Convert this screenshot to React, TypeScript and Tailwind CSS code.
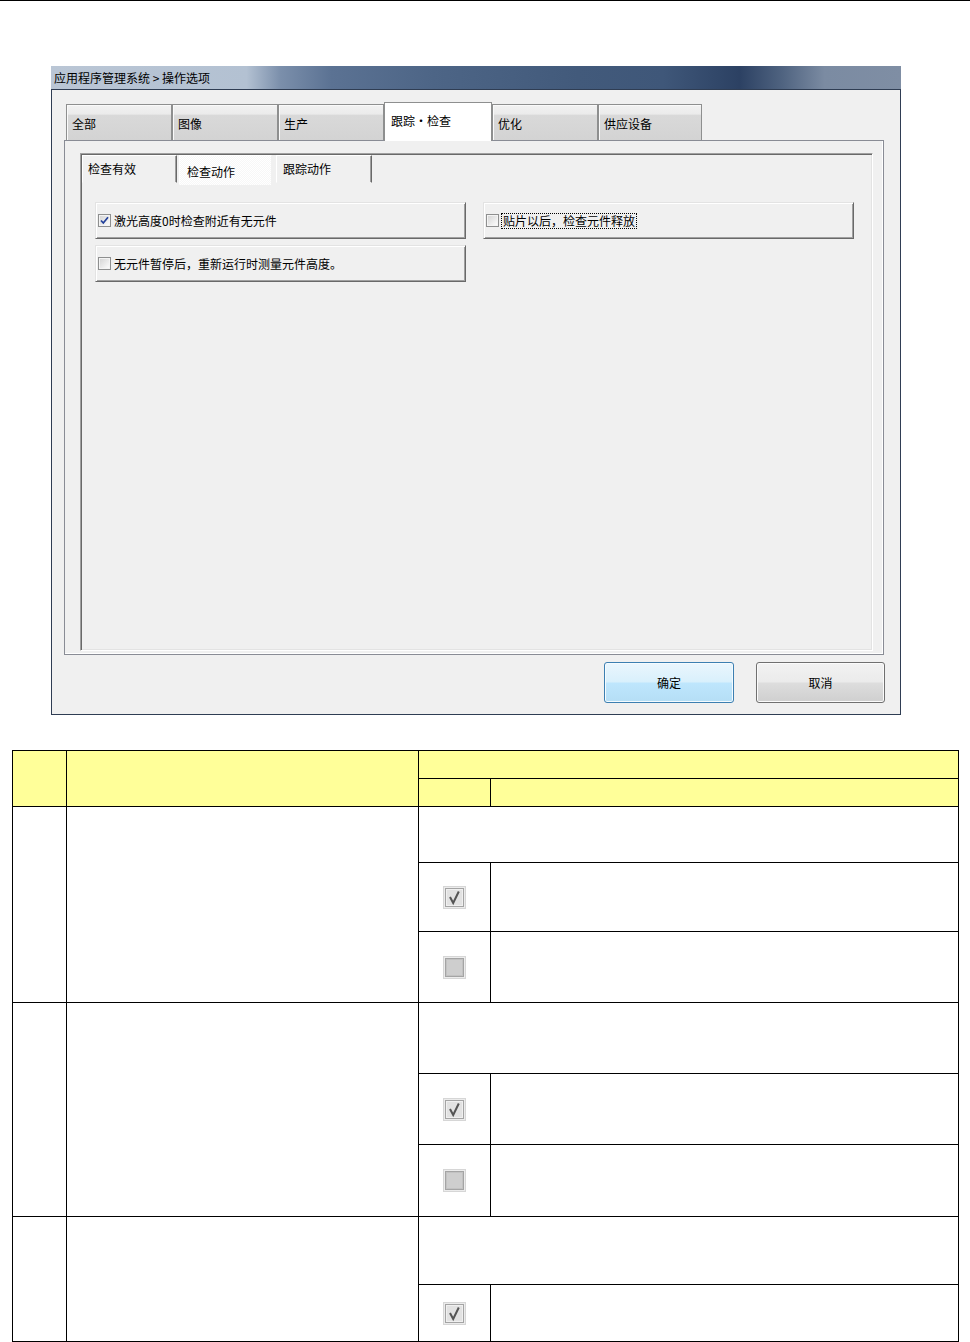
import React from "react";

const tabs = [
  { label: "全部", w: "w-[106px]" },
  { label: "图像", w: "w-[106px]" },
  { label: "生产", w: "w-[106px]" },
  { label: "跟踪・检查", w: "w-[108px]" },
  { label: "优化", w: "w-[106px]" },
  { label: "供应设备", w: "w-[104px]" },
];
const activeTab = 3;

function SmallCheck({ checked }: { checked: boolean }) {
  return (
    <svg width="13" height="13" viewBox="0 0 13 13" className="shrink-0">
      <defs>
        <linearGradient id={checked ? "cbOn" : "cbOff"} x1="0" y1="0" x2="1" y2="1">
          <stop offset="0" stopColor="#d6d6d6" />
          <stop offset="1" stopColor="#fbfbfb" />
        </linearGradient>
      </defs>
      <rect x="0.5" y="0.5" width="12" height="12" fill="#f4f4f4" stroke="#8e8f8f" />
      <rect x="2" y="2" width="9" height="9" fill={`url(#${checked ? "cbOn" : "cbOff"})`} />
      {checked && (
        <path d="M3 6.5 L5.3 9 L10 3.2" fill="none" stroke="#22409a" strokeWidth="1.7" />
      )}
    </svg>
  );
}

function TableCheck({ checked }: { checked: boolean }) {
  return (
    <svg width="23" height="23" viewBox="0 0 23 23" className="mx-auto block">
      <rect x="0.5" y="0.5" width="22" height="22" fill="#ececec" stroke="#d6d6d6" />
      <rect x="2.5" y="2.5" width="18" height="18" fill={checked ? "#e2e2e2" : "#cecece"} stroke="#a4a4a4" />
      <rect x="3.5" y="3.5" width="16" height="16" fill="none" stroke={checked ? "#f0f0f0" : "#c2c2c2"} />
      {checked && (
        <path d="M7 11 L10.2 17 L15.8 5.5" fill="none" stroke="#555555" strokeWidth="2" />
      )}
    </svg>
  );
}

function OptionButton({ label, checked, focused }: { label: string; checked: boolean; focused?: boolean }) {
  return (
    <div className="flex h-[37px] items-center border border-t-[#e3e3e3] border-l-[#e3e3e3] border-r-[#696969] border-b-[#696969] bg-[#f0f0f0] pl-[2px] shadow-[inset_1px_1px_0_#ffffff,inset_-1px_-1px_0_#a0a0a0]">
      <SmallCheck checked={checked} />
      <span
        className={
          focused
            ? "ml-[2px] border border-dotted border-black px-px leading-[14px]"
            : "ml-[3px] leading-[14px]"
        }
      >
        {label}
      </span>
    </div>
  );
}

export default function App() {
  return (
    <div className="h-[1342px] w-[970px] overflow-hidden bg-white font-['Noto_Sans_CJK_SC','Noto_Sans',sans-serif] text-[12px] text-black">
      <div className="h-px w-full bg-black" />

      {/* dialog */}
      <div className="ml-[51px] mt-[65px] w-[850px]">
        <div className="flex h-[23px] items-center bg-[linear-gradient(90deg,#bac6d5_0%,#b3c1d2_23%,#7b8fab_27%,#5b7293_33%,#4d6586_45%,#425a7b_62%,#3f5779_72%,#2c4163_81%,#4f6380_86%,#7b8ba2_91%,#7f8ea4_100%)] pl-[3px]">
          应用程序管理系统 &gt; 操作选项
        </div>

        <div className="flex flex-col border border-[#2f3d53] bg-[#f0f0f0] pb-[11px] pt-[12px]">
          <div className="ml-[12px] w-[820px]">
            {/* main tabs */}
            <div className="flex h-[38px] items-end pl-[2px]">
              {tabs.map((t, i) =>
                i === activeTab ? (
                  <div
                    key={t.label}
                    className={`relative z-10 -mb-px flex h-[39px] ${t.w} items-center border border-b-0 border-[#8e8f8f] bg-white pb-[3px] pl-[6px]`}
                  >
                    {t.label}
                  </div>
                ) : (
                  <div
                    key={t.label}
                    className={`flex h-[36px] ${t.w} items-center border border-b-0 border-[#8e8f8f] bg-[linear-gradient(#f2f2f2_0%,#ebebeb_26%,#d9d9d9_29%,#d3d3d3_100%)] pl-[5px] pt-[2px] shadow-[inset_1px_1px_0_#fafafa]`}
                  >
                    {t.label}
                  </div>
                )
              )}
            </div>

            {/* tab panel */}
            <div className="h-[515px] border border-[#898c95] bg-[#f0f0f0] pl-[15px] pt-[12px] shadow-[inset_-1px_-1px_0_#ffffff]">
              <div className="flex h-[498px] w-[793px] flex-col border border-t-[#a0a0a0] border-l-[#a0a0a0] border-r-white border-b-white shadow-[inset_1px_1px_0_#696969,inset_-1px_-1px_0_#e3e3e3]">
                {/* sub tabs */}
                <div className="ml-px mt-px flex h-[29px] items-start">
                  <div className="flex h-[28px] w-[95px] items-center border border-t-white border-l-white border-r-[#696969] border-b-[#f0f0f0] pl-[5px] shadow-[inset_-1px_0_0_#a0a0a0]">
                    检查有效
                  </div>
                  <div className="ml-[2px] flex h-[30px] w-[93px] items-center border border-t-white border-l-white border-r-[#f0f0f0] border-b-transparent bg-[repeating-conic-gradient(#f7f7f7_0%_25%,#ffffff_0%_50%)] bg-[length:2px_2px] pl-[7px] pt-[3px]">
                    检查动作
                  </div>
                  <div className="ml-[4px] flex h-[28px] w-[96px] items-center border border-t-white border-l-white border-r-[#696969] border-b-[#f0f0f0] pl-[6px] shadow-[inset_-1px_0_0_#a0a0a0]">
                    跟踪动作
                  </div>
                </div>

                {/* options */}
                <div className="ml-[14px] mt-[18px] grid grid-cols-[371px_371px] gap-x-[17px] gap-y-[6px]">
                  <OptionButton label="激光高度0时检查附近有无元件" checked />
                  <OptionButton label="贴片以后，检查元件释放" checked={false} focused />
                  <OptionButton label="无元件暂停后，重新运行时测量元件高度。" checked={false} />
                </div>
              </div>
            </div>
          </div>

          {/* dialog buttons */}
          <div className="mt-[7px] flex justify-end gap-[22px] pr-[15px]">
            <button className="h-[41px] w-[130px] rounded-[3px] border border-[#3c7fb1] bg-[linear-gradient(#eaf6fd_0%,#d9f0fc_48%,#bee6fd_52%,#b5def5_100%)] shadow-[inset_0_0_0_1px_#f4fbff]">
              确定
            </button>
            <button className="h-[41px] w-[129px] rounded-[3px] border border-[#707070] bg-[linear-gradient(#f2f2f2_0%,#ebebeb_48%,#dddddd_52%,#cfcfcf_100%)] shadow-[inset_0_0_0_1px_#fbfbfb]">
              取消
            </button>
          </div>
        </div>
      </div>

      {/* table */}
      <table className="ml-[12px] mt-[35px] w-[946px] table-fixed border-collapse">
        <colgroup>
          <col className="w-[54px]" />
          <col className="w-[352px]" />
          <col className="w-[72px]" />
          <col className="w-[468px]" />
        </colgroup>
        <tbody>
          <tr className="h-[28px]">
            <td rowSpan={2} className="border border-black bg-[#ffff99]" />
            <td rowSpan={2} className="border border-black bg-[#ffff99]" />
            <td colSpan={2} className="border border-black bg-[#ffff99]" />
          </tr>
          <tr className="h-[28px]">
            <td className="border border-black bg-[#ffff99]" />
            <td className="border border-black bg-[#ffff99]" />
          </tr>

          <tr className="h-[56px]">
            <td rowSpan={3} className="border border-black" />
            <td rowSpan={3} className="border border-black" />
            <td colSpan={2} className="border border-black" />
          </tr>
          <tr className="h-[69px]">
            <td className="border border-black">
              <TableCheck checked />
            </td>
            <td className="border border-black" />
          </tr>
          <tr className="h-[71px]">
            <td className="border border-black">
              <TableCheck checked={false} />
            </td>
            <td className="border border-black" />
          </tr>

          <tr className="h-[71px]">
            <td rowSpan={3} className="border border-black" />
            <td rowSpan={3} className="border border-black" />
            <td colSpan={2} className="border border-black" />
          </tr>
          <tr className="h-[71px]">
            <td className="border border-black">
              <TableCheck checked />
            </td>
            <td className="border border-black" />
          </tr>
          <tr className="h-[72px]">
            <td className="border border-black">
              <TableCheck checked={false} />
            </td>
            <td className="border border-black" />
          </tr>

          <tr className="h-[68px]">
            <td rowSpan={2} className="border border-black" />
            <td rowSpan={2} className="border border-black" />
            <td colSpan={2} className="border border-black" />
          </tr>
          <tr className="h-[57px]">
            <td className="border border-black">
              <TableCheck checked />
            </td>
            <td className="border border-black" />
          </tr>
        </tbody>
      </table>
    </div>
  );
}
